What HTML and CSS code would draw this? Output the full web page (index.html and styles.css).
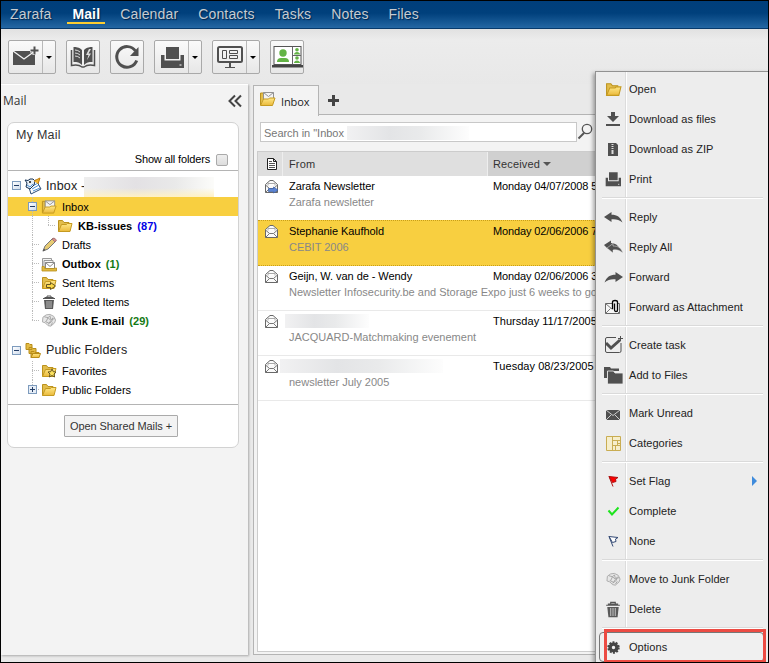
FILE: index.html
```html
<!DOCTYPE html>
<html lang="en">
<head>
<meta charset="utf-8">
<title>Zarafa WebApp</title>
<link rel="stylesheet" href="styles.css">
</head>
<body>
<svg class="defs" width="0" height="0">
  <defs>
    <linearGradient id="gold" x1="0" y1="0" x2="0" y2="1"><stop offset="0" stop-color="#ffe888"/><stop offset="1" stop-color="#eab93a"/></linearGradient>
    <symbol id="folder" viewBox="0 0 16 16"><path d="M1.500 13.500v-11h4l1.500 2h5v3" fill="#e2bd4c" stroke="#bb921d"/><path d="M1.500 13.500l3-7h5l1-1h4.500l-2 8z" fill="url(#gold)" stroke="#c59a20"/></symbol>
    <symbol id="inbox" viewBox="0 0 17 16"><path d="M1.500 14v-12h3v6" fill="#e2bd4c" stroke="#bb921d"/><path d="M4.500 1.500h10v8h-10z" fill="#f4f4f4" stroke="#929292"/><path d="M4.500 1.500l5 4 5-4" fill="none" stroke="#929292"/><path d="M1.500 14.500l3-6.500h5l1-1h5.500l-2.500 7.500z" fill="url(#gold)" stroke="#c59a20"/></symbol>
    <symbol id="trash" viewBox="0 0 16 16"><path d="M2 4.500h12M6 3V2h4v1M3.500 3.500h9" fill="none" stroke="#555"/><path d="M3 6h10l-1 9H4z" fill="#5a5a5a"/><path d="M6 7v7M8 7v7M10 7v7" stroke="#bbb"/></symbol>
    <symbol id="junk" viewBox="0 0 16 16"><path d="M5 2l4-.5 4 2 2 4-1 3-4 3.500-3-.5-3-3-3-1 .5-5z" fill="#e7e7e7" stroke="#aaa"/><path d="M3 4l4 1 2-2 1 4 4-1M5 9l2-4 3 3-2 3-4-2M7 12l4-3 1-4M10 13l2-3" fill="none" stroke="#9c9c9c" stroke-width=".9"/></symbol>
    <symbol id="read" viewBox="0 0 15 15"><path d="M1.500 5.500l4.500-4h3l4.500 4v8h-12z" fill="#fafafa" stroke="#686868"/><path d="M1.500 6l4 3.500h4l4-3.500M1.500 13.500L5.500 9.500M13.500 13.500l-4-4" fill="none" stroke="#777"/><path d="M4 6.500V4.500h7v2" fill="#fff" stroke="#aaa"/></symbol>
    <symbol id="printer" viewBox="0 0 24 24"><path d="M6 2h13v12H6zM1 10h3.500v5.500h16V10H24v13H1z" fill="#505050"/><path d="M19.500 20h2" stroke="#fff"/></symbol>
    <symbol id="reply" viewBox="0 0 19 13"><path d="M0 6L7.500 1v2.700C13 3.700 16.500 6 18.500 11.500 15 8.500 12 8 7.500 8.300V11z" fill="#505050"/></symbol>
    <symbol id="flag" viewBox="0 0 14 14"><path d="M3 2.500l9 1L9.500 5l.5 2.500-3.500 1z"/><path d="M3 2.500l4 10" fill="none"/></symbol>
  </defs>
</svg>
<div class="app">
  <nav class="topbar">
    <a>Zarafa</a><a class="active">Mail</a><a>Calendar</a><a>Contacts</a><a>Tasks</a><a>Notes</a><a>Files</a>
  </nav>
  <div class="toolbar">
    <div class="btn split"><span><svg width="26" height="24" viewBox="0 0 26 24"><path d="M0 6h22v14H0z" fill="#505050"/><path d="M0 6l11 8 11-8" fill="none" stroke="#f4f4f4" stroke-width="1.300"/><path d="M21.500 1v9M17 5.500h9" stroke="#f4f4f4" stroke-width="4"/><path d="M21.500 1.500v8M17.500 5.500h8" stroke="#505050" stroke-width="2"/></svg></span><i></i></div>
    <div class="btn"><span><svg width="26" height="24" viewBox="0 0 26 24"><path d="M12 5C9 2 6 2 3.500 2v15c4 0 6 .5 8.500 3zM14 5c3-3 6-3 8.500-3v15c-4 0-6 .5-8.500 3z" fill="#505050"/><path d="M1.500 5v15.500c5-1 8-.5 10.500 1.500h2c2.500-2 5.500-2.500 10.500-1.500V5" fill="none" stroke="#505050" stroke-width="1.500"/><path d="M5 5q3 0 5 2M5 8q3 0 5 2M5 11q3 0 5 2" fill="none" stroke="#ddd"/><path d="M19 4l-3 6h2.500l-1.500 5 4-6.500h-2.500l2.500-4.500z" fill="#ddd"/></svg></span></div>
    <div class="btn"><span><svg width="26" height="26" viewBox="0 0 26 26"><path d="M21.500 7A10.300 10.300 0 1 0 22.700 16.500" fill="none" stroke="#505050" stroke-width="3"/><path d="M24.500 3v9h-8.500z" fill="#505050"/></svg></span></div>
    <div class="btn split"><span><svg width="24" height="24"><use href="#printer"/></svg></span><i></i></div>
    <div class="btn split"><span><svg width="26" height="24" viewBox="0 0 26 24" fill="none" stroke="#505050"><rect x="1" y="2" width="24" height="15" rx="1.500" stroke-width="2"/><path d="M5.500 5.500h4v8h-4zM12.500 5.500h8v3h-8zM12.500 10.500h8v3h-8z"/><path d="M13 17v5" stroke-width="2"/><path d="M8 22.500h10"/></svg></span><i></i></div>
    <div class="btn meet"><span><svg width="32" height="24" viewBox="0 0 32 24"><rect x="3" y="1.500" width="27" height="18" fill="#fff" stroke="#555"/><path d="M21.500 2v17M22 10.500h8" stroke="#666"/><path d="M1 20h31v2.500H1z" fill="#444"/><g fill="#63b345"><circle cx="12" cy="8" r="3.700"/><path d="M6 17q0-4 4-4h4q4 0 4 4z"/><circle cx="26" cy="4.800" r="1.800"/><path d="M23 9.500q0-2 3-2.500 3 .5 3 2.500z"/><circle cx="26" cy="13" r="1.800"/><path d="M23 18q0-2 3-2.500 3 .5 3 2.500z"/></g></svg></span></div>
  </div>
  <div class="workspace">
    <aside class="side">
      <header><h1>Mail</h1><svg width="14" height="14" viewBox="0 0 14 14" fill="none" stroke="#444" stroke-width="2"><path d="M7 1.500L1.500 7 7 12.500M13 1.500L7.500 7 13 12.500"/></svg></header>
      <section class="card">
        <h2>My Mail</h2>
        <div class="showall">Show all folders <b></b></div>
        <div class="tree">
          <div class="row root"><em class="tog"></em><svg width="18" height="18" viewBox="0 0 18 18"><path d="M4 7l8-4 5 9-10 5z" fill="#fff" stroke="#2b4a75"/><path d="M7 10l7-4M8 12l7-4M9 14l7-3" stroke="#4b8fd2"/><path d="M1 3l3 .5L6 2h3l2 2-1 4-4 4-4-2 1-4z" fill="#e5eef6" stroke="#173255"/><path d="M10 4l6-3-2 6" fill="#f4b52c" stroke="#bd7c10"/><circle cx="6" cy="5" r="1" fill="#111"/><path d="M3 8l3 2 3-3" fill="none" stroke="#4b8fd2"/></svg><span>Inbox -</span><u class="smudge name"></u></div>
          <div class="row sel"><em class="guide start"></em><em class="tog"></em><svg width="17" height="16"><use href="#inbox"/></svg><span>Inbox</span></div>
          <div class="row deep"><em class="guide end"></em><svg width="16" height="16"><use href="#folder"/></svg><span><b>KB-issues</b><b class="blue">(87)</b></span></div>
          <div class="row"><em class="guide"></em><svg width="16" height="16" viewBox="0 0 16 16"><path d="M2 14l2-5 8-8 3 3-8 8z" fill="#e7cb73" stroke="#777"/><path d="M11 2l3 3 1.500-2-2.500-2z" fill="#d88d86" stroke="#a77"/><path d="M1.500 14.500l3-1.500L3 11.500z" fill="#555"/></svg><span>Drafts</span></div>
          <div class="row"><em class="guide"></em><svg width="16" height="16" viewBox="0 0 16 16"><path d="M1.500 11V2.500h9v2M3 10V4.500h9v2" fill="#f4f4f4" stroke="#999"/><path d="M4.500 6.500h9v6h-9z" fill="#fff" stroke="#888"/><path d="M4.500 6.500l4.500 4 4.500-4" fill="none" stroke="#888"/><path d="M1 10.500h2.500v2h9l3-.5v3H1z" fill="#e0b941" stroke="#b78e18" stroke-width=".8"/></svg><span><b>Outbox</b><b class="green">(1)</b></span></div>
          <div class="row"><em class="guide"></em><svg width="16" height="16" viewBox="0 0 16 16"><use href="#folder"/><path d="M5.500 9.500h4v-2l5 3.500-5 3.500v-2h-4z" fill="#fad747" stroke="#665522"/></svg><span>Sent Items</span></div>
          <div class="row"><em class="guide"></em><svg width="16" height="16"><use href="#trash"/></svg><span>Deleted Items</span></div>
          <div class="row"><em class="guide end"></em><svg width="15" height="15"><use href="#junk"/></svg><span><b>Junk E-mail</b><b class="green">(29)</b></span></div>
          <div class="row root second"><em class="tog"></em><svg width="17" height="17" viewBox="0 0 17 17" fill="#e3bb45" stroke="#b88d18"><path d="M1.500 7.500v-6h3l1 1h2v5zM4.500 11.500v-6h3l1 1h3v5zM6.500 15.500v-6h3l1 1h4v5z"/><path d="M6.500 15.500l2-4h7.500l-1.500 4z" fill="url(#gold)"/></svg><span>Public Folders</span></div>
          <div class="row"><em class="guide"></em><svg width="16" height="16" viewBox="0 0 16 16"><use href="#folder"/><path d="M11 6l1.300 2.700 2.700.3-2 2 .6 3L11 12.500 8.400 14l.6-3-2-2 2.700-.3z" fill="#fbe25e" stroke="#665522"/></svg><span>Favorites</span></div>
          <div class="row"><em class="guide end"></em><em class="tog plus"></em><svg width="16" height="16"><use href="#folder"/></svg><span>Public Folders</span></div>
        </div>
        <div class="shared"><button>Open Shared Mails +</button></div>
      </section>
    </aside>
    <main class="content">
      <div class="tabs"><div class="tab"><svg width="17" height="16"><use href="#inbox"/></svg>Inbox</div><div class="add"><svg width="11" height="11"><path d="M5.500 0v11M0 5.500h11" stroke="#444" stroke-width="3"/></svg></div></div>
      <div class="pane">
        <div class="search"><div class="field">Search in "Inbox<u class="smudge"></u></div><svg width="17" height="17" viewBox="0 0 17 17" fill="none" stroke="#555"><circle cx="10" cy="6" r="4.700" stroke-width="1.300"/><path d="M7 10l-5.500 5.500" stroke-width="2"/></svg></div>
        <div class="grid">
          <div class="mail head"><div class="ic"><svg width="12" height="14" viewBox="0 0 12 14"><path d="M1.500 1.500h6l3 3v8h-9zM7.500 1.500v3h3" fill="#fff" stroke="#222"/><path d="M3 4.500h3M3 6.500h6M3 8.500h6M3 10.500h6" stroke="#555"/></svg></div><div class="from">From</div><div class="date">Received <i></i></div></div>
          <div class="mail"><div class="ic"><svg width="15" height="15" viewBox="0 0 15 15"><use href="#read"/><path d="M4.500 9.500h5v-1.500l4.500 3-4.500 3v-1.500h-5z" fill="#5b84d4" stroke="#3a5ea8" stroke-width=".7"/></svg></div><div class="from">Zarafa Newsletter<p>Zarafa newsletter</p></div><div class="date tight">Monday 04/07/2008 5:12</div></div>
          <div class="mail sel"><div class="ic"><svg width="15" height="15"><use href="#read"/></svg></div><div class="from">Stephanie Kaufhold<p>CEBIT 2006</p></div><div class="date tight">Monday 02/06/2006 7:30</div></div>
          <div class="mail"><div class="ic"><svg width="15" height="15"><use href="#read"/></svg></div><div class="from">Geijn, W. van de - Wendy<p>Newsletter Infosecurity.be and Storage Expo just 6 weeks to go</p></div><div class="date tight">Monday 02/06/2006 3:15</div></div>
          <div class="mail"><div class="ic"><svg width="15" height="15"><use href="#read"/></svg></div><div class="from"><u class="smudge short"></u><p>JACQUARD-Matchmaking evenement</p></div><div class="date">Thursday 11/17/2005</div></div>
          <div class="mail"><div class="ic"><svg width="15" height="15"><use href="#read"/></svg></div><div class="from"><u class="smudge long"></u><p>newsletter July 2005</p></div><div class="date">Tuesday 08/23/2005</div></div>
        </div>
      </div>
    </main>
  </div>
  <div class="menu">
    <div class="item"><svg width="17" height="17" viewBox="0 0 16 16"><use href="#folder"/></svg>Open</div>
    <div class="item"><svg width="14" height="16" viewBox="0 0 14 16"><path d="M5 1h4v4h4L7 11 1 5h4zM0 13h14v2H0z" fill="#505050"/></svg>Download as files</div>
    <div class="item"><svg width="12" height="14" viewBox="0 0 12 14"><path d="M1 1h8l2 2v11H1z" fill="#505050"/><path d="M5.500 2v7" stroke="#ddd" stroke-width="2" stroke-dasharray="1 1"/><path d="M4.500 9h2v3h-2z" fill="#ddd"/></svg>Download as ZIP</div>
    <div class="item"><svg width="16" height="16"><use href="#printer"/></svg>Print</div>
    <hr>
    <div class="item"><svg width="19" height="13"><use href="#reply"/></svg>Reply</div>
    <div class="item"><svg width="19" height="14" viewBox="0 0 19 14"><path d="M0 5L7 .5v2.500q6 0 9 6l-8-3-4 3z" fill="#505050"/><path d="M3 8l6-4.500v2.500c5.500 0 8 2 10 7-4-3-6-3.500-10-3V13z" fill="#505050" stroke="#ededed" stroke-width=".5"/></svg>Reply All</div>
    <div class="item"><svg class="flip" width="19" height="13"><use href="#reply"/></svg>Forward</div>
    <div class="item"><svg width="16" height="16" viewBox="0 0 16 16"><path d="M.5 4.500h14v10H.5z" fill="#f7f7f7" stroke="#666"/><path d="M.5 4.500l7 6M.5 14.500l5-5M14.500 14.500l-5-5" fill="none" stroke="#777"/><path d="M7.500 10V3q0-1.500 2.500-1.500t2.500 1.500v8q0 1.500-1.500 1.500t-1.500-1.500V4.500" fill="#eee" stroke="#000" stroke-width="1.300"/></svg>Forward as Attachment</div>
    <hr>
    <div class="item"><svg width="19" height="18" viewBox="0 0 19 18"><path d="M12 1.500H3Q1.500 1.500 1.500 3v12Q1.500 16.500 3 16.500h12.500q1.500 0 1.500-1.500V7" fill="none" stroke="#505050"/><path d="M2 7l5 5 9-8" fill="none" stroke="#505050" stroke-width="3"/><path d="M16.500 0v5M14 2.500h5" stroke="#505050"/></svg>Create task</div>
    <div class="item"><svg width="19" height="17" viewBox="0 0 19 17"><path d="M0 0h6l1 1.500h8V4H3v7H0z" fill="#505050"/><path d="M3.500 4h6l1.500 2h8v11H3.500z" fill="#505050" stroke="#ededed" stroke-width=".8"/></svg>Add to Files</div>
    <hr>
    <div class="item"><svg class="low" width="14" height="10" viewBox="0 0 14 10"><path d="M0 0h14v10H0z" fill="#505050"/><path d="M0 0l7 5.500L14 0M0 10l5-5M14 10L9 5" fill="none" stroke="#ededed" stroke-width=".8"/></svg>Mark Unread</div>
    <div class="item"><svg width="15" height="15" viewBox="0 0 15 15"><path d="M.5.500h14v14H.5zM6.500.500v14M6.500 4.500h8M11.500 4.500v5M6.500 9.500h8M9.500 9.500v5M11.500 7.500h3" fill="#f6eecb" stroke="#c9ad52"/></svg>Categories</div>
    <hr>
    <div class="item"><svg width="14" height="14" fill="#f00" stroke="#b01010"><use href="#flag"/></svg>Set Flag<i class="arrow"></i></div>
    <div class="item"><svg width="13" height="12" viewBox="0 0 13 12"><path d="M1.500 5.500l3.500 4 6.500-7" fill="none" stroke="#1ee41e" stroke-width="2"/></svg>Complete</div>
    <div class="item"><svg width="14" height="14" fill="#fff" stroke="#344a75"><use href="#flag"/></svg>None</div>
    <hr>
    <div class="item"><svg width="15" height="15"><use href="#junk"/></svg>Move to Junk Folder</div>
    <div class="item"><svg width="16" height="17" viewBox="1 1 14 14.500"><use href="#trash" width="16" height="16"/></svg>Delete</div>
    <hr>
    <div class="item options"><svg width="13" height="13" viewBox="0 0 13 13"><circle cx="6.500" cy="6.500" r="3.400" fill="none" stroke="#444" stroke-width="3.400"/><circle cx="6.500" cy="6.500" r="5.300" fill="none" stroke="#444" stroke-width="1.800" stroke-dasharray="2 1.330"/></svg>Options</div>
    <div class="mark"></div>
  </div>
</div>
</body>
</html>
```
FILE: styles.css
```css
* { box-sizing: border-box; }
body { margin: 0; font: 11px/14px "Liberation Sans", Arial, sans-serif; color: #222; }
svg { display: block; flex: none; }
.defs { position: absolute; }
em, i { font-style: normal; }
u { text-decoration: none; }
.app { position: relative; width: 769px; height: 663px; border: 1px solid #000; background: #e9e9e9; overflow: hidden; display: flex; flex-direction: column; }

.topbar { height: 28px; flex: none; display: flex; gap: 20px; padding: 3px 0 0 9px; background: linear-gradient(#003e7b, #00407c 45%, #2467a3); border-bottom: 1px solid #073a6c; }
.topbar a { height: 20px; font-size: 14px; line-height: 20px; letter-spacing: .15px; color: #c6cbd0; text-shadow: 1px 1px 1px #00244c; }
.topbar .active { color: #fff; font-weight: bold; border-bottom: 2px solid #fccd31; padding: 0 5px; margin: 0 -5px 0 -4px; }

.toolbar { height: 55px; flex: none; display: flex; gap: 10px; padding: 11px 7px; background: linear-gradient(#e1e1e1, #ececec 20%, #e8e8e8); }
.btn { height: 34px; width: 34px; display: flex; border: 1px solid #a9a9a9; border-radius: 2px; background: linear-gradient(#fafafa, #e7e7e7); }
.btn span { flex: 1; display: flex; align-items: center; justify-content: center; }
.split { width: 48px; }
.split i { width: 13px; border-left: 1px solid #b9b9b9; display: flex; align-items: center; justify-content: center; }
.split i::before { content: ""; border: 3px solid transparent; border-top-color: #000; border-bottom: 0; }

.workspace { flex: 1; display: flex; min-height: 0; padding-bottom: 6px; }
.side { width: 247px; height: 571px; background: #f3f3f3; border-top: 1px solid #fff; box-shadow: 1px 1px 2px #aaa; }
.side header { height: 37px; display: flex; align-items: center; justify-content: space-between; padding: 0 6px 6px 2px; }
.side h1, .side h2 { margin: 0; font: 12px/16px "Open Sans", sans-serif; color: #333; }
.card { width: 232px; height: 326px; margin-left: 6px; background: #fff; border: 1px solid #d2d2d2; border-radius: 7px; }
.side h2 { padding: 4px 8px 0; height: 26px; font: 12.5px/16px "Liberation Sans", Arial, sans-serif; letter-spacing: .25px; }
.showall { height: 21px; display: flex; justify-content: flex-end; align-items: center; gap: 6px; padding: 0 10px 2px 0; color: #000; letter-spacing: -.15px; }
.showall b { width: 12px; height: 12px; margin-top: 2px; border: 1px solid #aaa; border-radius: 2px; background: linear-gradient(#eee, #ddd); }
.tree { border-top: 1px solid #b4b4b4; border-bottom: 1px solid #b4b4b4; height: 235px; padding-top: 3px; color: #000; }
.row { position: relative; height: 19px; display: flex; align-items: center; padding-left: 33px; letter-spacing: -.05px; }
.row > svg { width: 16px; margin-right: 5px; }
.root { height: 24px; padding-left: 4px; font: 12.5px/16px "Liberation Sans", Arial, sans-serif; letter-spacing: .15px; color: #222; }
.root > svg { width: 18px; margin: 0 4px 0 3px; }
.root:first-child { height: 23px; }
.root.second { margin-top: 7px; padding-top: 2px; }
.row.sel { background: #f8cf40; }
.deep { padding-left: 49px; }
.blue, .green { margin-left: 5px; }
.blue { color: #0000e6; }
.green { color: #147a14; }
.row b { letter-spacing: .05px; }
.guide { position: absolute; left: 24px; top: 0; width: 8px; height: 19px; background: repeating-linear-gradient(#bbb 0 1px, transparent 1px 2px) 0 0 / 1px 100% no-repeat, repeating-linear-gradient(90deg, #bbb 0 1px, transparent 1px 2px) 0 9px / 8px 1px no-repeat; }
.guide.end { background-size: 1px 10px, 8px 1px; }
.guide.start { background-size: 1px 100%, 0 0; }
.deep .guide { left: 40px; }
.deep::before { content: ""; position: absolute; left: 24px; top: 0; width: 1px; height: 19px; background: repeating-linear-gradient(#bbb 0 1px, transparent 1px 2px); }
.tog { width: 9px; height: 9px; flex: none; border: 1px solid #7d9bbd; background: linear-gradient(#233d66, #233d66) center / 5px 1px no-repeat, linear-gradient(135deg, #fff, #cfdcec); }
.row:not(.root) > .tog { position: absolute; left: 20px; top: 5px; }
.tog.plus { background: linear-gradient(#233d66, #233d66) center / 5px 1px no-repeat, linear-gradient(#233d66, #233d66) center / 1px 5px no-repeat, #e6edf6; }
.shared { display: flex; justify-content: center; padding: 10px 4px 0 0; }
.shared button { width: 114px; height: 22px; padding: 0; font: inherit; letter-spacing: -.08px; color: #333; border: 1px solid #aaa; border-radius: 1px; background: #f3f3f3; white-space: nowrap; }

.smudge { display: block; height: 14px; background: linear-gradient(90deg, #f1f1f2, #e3e4e6 35%, #e9eaeb 60%, #fdfdfd); }
.name { width: 130px; height: 20px; position: absolute; left: 76px; top: 3px; background: linear-gradient(transparent 55%, #fff1c4), linear-gradient(90deg, #eee, #e3e1e4 40%, #e9e9e9 70%, #fcfcfa); }

.content { flex: 1; margin-left: 5px; padding-top: 1px; display: flex; flex-direction: column; }
.tabs { height: 30px; flex: none; display: flex; }
.tab { position: relative; width: 66px; height: 31px; margin-bottom: -1px; flex: none; display: flex; align-items: center; gap: 5px; padding: 1px 0 0 5px; border: 1px solid #b4b4b4; border-bottom: 0; background: #f3f3f3; font: 11px/14px "Open Sans", sans-serif; letter-spacing: -.1px; }
.tab svg { margin-top: -6px; }
.add { padding: 10px 0 0 9px; flex: 1; border-bottom: 1px solid #b4b4b4; }
.pane { height: 540px; border: 1px solid #b4b4b4; border-top: 0; background: #f3f3f3; padding: 7px 0 3px 3px; }
.search { display: flex; height: 29px; gap: 0; padding-left: 3px; }
.search svg { margin-top: 1px; }
.field { width: 317px; height: 20px; border: 1px solid #c8c8c8; background: #fff; display: flex; align-items: center; padding: 1px 0 0 3px; color: #777; letter-spacing: -.03px; white-space: nowrap; }
.field .smudge { width: 122px; margin-left: 3px; }
.grid { height: 501px; border: 1px solid #ccc; background: #fff; }
.mail { display: flex; height: 45px; border-bottom: 1px solid #e9e9e9; padding-top: 3px; color: #000; white-space: nowrap; letter-spacing: -.06px; }
.ic { width: 31px; flex: none; padding-left: 6px; }
.from { width: 204px; flex: none; }
.date { flex: 1; letter-spacing: .04px; }
.date.tight { letter-spacing: -.12px; }
.from p { margin: 2px 0 0; color: #888; letter-spacing: 0; }
.mail.sel { background: #f8cf40; border: 1px dotted #c99f18; border-left: 0; margin-top: -1px; height: 46px; }
.head { height: 24px; padding: 0; color: #333; background: #dfdfdf; align-items: stretch; border: 0; }
.head > div { padding-top: 5px; letter-spacing: .15px; }
.head .ic { width: 25px; border-right: 1px solid #eee; padding-left: 8px; }
.head .from { padding-left: 6px; width: 204px; }
.head .date { border-left: 1px solid #eee; padding-left: 5px; background: #d0d0d0; }
.head .date i { display: inline-block; border: 4px solid transparent; border-top-color: #555; border-bottom: 0; vertical-align: 2px; }
.short { width: 84px; margin: 0 0 0 -4px; }
.long { width: 163px; margin: 0 0 0 -9px; }

.menu { position: absolute; left: 594px; top: 70px; width: 174px; height: 592px; padding: 2px 4px 0 4px; border: 1px solid #929292; border-right: 0; border-bottom: 0; background: linear-gradient(90deg, transparent 29px, #dcdcdc 29px 30px, #fff 30px 31px, transparent 31px), #ededed; box-shadow: -2px 2px 4px #0005; letter-spacing: .04px; }
.item { height: 30px; display: grid; grid-template-columns: 26px 1fr auto; column-gap: 3px; align-items: center; color: #222; white-space: nowrap; }
.item svg { justify-self: center; }
.flip { transform: scaleX(-1); }
.low { margin-top: 4px; }
.menu hr { height: 2px; margin: 3px 2px; border: 0; background: linear-gradient(#dadada 50%, #fff 50%); }
.arrow { margin-right: 8px; border: 5px solid transparent; border-left-color: #3f8bdc; border-right: 0; }
.options { border: 1px solid #777; border-radius: 4px; background: #f0f0f0; margin: 0 1px 0 -1px; }
.mark { position: absolute; left: 8px; top: 557px; width: 162px; height: 34px; border: 3px solid #ec4b43; }
```
